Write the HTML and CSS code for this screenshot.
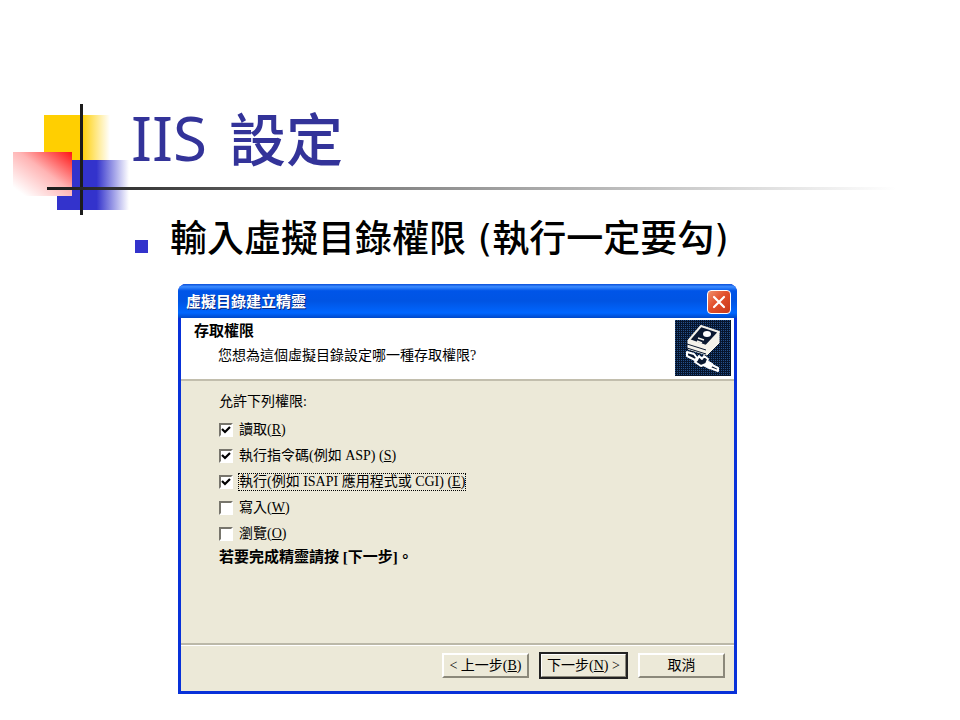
FILE: index.html
```html
<!DOCTYPE html>
<html lang="zh-Hant">
<head>
    <meta charset="UTF-8">
    <meta name="viewport" content="width=device-width, initial-scale=1.0">
    <title>IIS 設定</title>
    <link rel="stylesheet" href="styles.css">
</head>
<body>
    <header class="slide-header">
        <svg class="ornament" width="124" height="120" viewBox="0 0 124 120" aria-hidden="true">
            <defs>
                <linearGradient id="yellow" x1="0" x2="1">
                    <stop offset="0.55" stop-color="#ffcf01"/>
                    <stop offset="0.97" stop-color="#ffcf01" stop-opacity="0"/>
                </linearGradient>
                <linearGradient id="blue" x1="0" x2="1">
                    <stop offset="0.55" stop-color="#3333cc"/>
                    <stop offset="1" stop-color="#3333cc" stop-opacity="0"/>
                </linearGradient>
                <linearGradient id="red" x1="1" y1="0" x2="0.1" y2="0.9">
                    <stop offset="0" stop-color="#ff1414"/>
                    <stop offset="0.5" stop-color="#ffb4b4"/>
                    <stop offset="1" stop-color="#ffffff"/>
                </linearGradient>
            </defs>
            <rect x="31" y="11" width="68" height="46" fill="url(#yellow)"/>
            <rect x="44" y="56" width="72" height="50" fill="url(#blue)"/>
            <rect x="0" y="48" width="59" height="44" fill="url(#red)"/>
            <rect x="67" y="0" width="3" height="111" fill="#1c1c1c"/>
        </svg>
        <h1><span class="latin">IIS</span> <span>設定</span></h1>
    </header>

    <main>
        <ul class="points">
            <li>輸入虛擬目錄權限 (執行一定要勾)</li>
        </ul>

        <form class="dialog">
            <div class="title-bar">
                <h2>虛擬目錄建立精靈</h2>
                <button class="close-button" type="button" aria-label="關閉">
                    <svg width="14" height="14" viewBox="0 0 14 14"><path d="M2 2L12 12M12 2L2 12" stroke="#fff" stroke-width="2.2" stroke-linecap="round"/></svg>
                </button>
            </div>

            <div class="dialog-body">
                <div class="banner">
                    <div class="banner-text">
                        <h3>存取權限</h3>
                        <p>您想為這個虛擬目錄設定哪一種存取權限?</p>
                    </div>
                    <svg class="banner-icon" width="56" height="56" viewBox="0 0 56 56" aria-hidden="true">
                        <defs>
                            <pattern id="dots" width="2" height="2" patternUnits="userSpaceOnUse">
                                <rect width="2" height="2" fill="#06152d"/>
                                <rect width="1" height="1" fill="#24508a"/>
                            </pattern>
                        </defs>
                        <rect width="56" height="56" fill="url(#dots)"/>
                        <g stroke-linejoin="round">
                            <!-- stacked pages -->
                            <path d="M13 20L31 26L44 13V23L32 35L13 29Z" fill="#f4f2ea" stroke="#f4f2ea"/>
                            <path d="M12 24L31 30M12 28L31 34" fill="none" stroke="#0a1830"/>
                            <!-- cover -->
                            <path d="M14 20L26 6L44 12L31 26Z" fill="#0a1830" stroke="#f4f2ea" stroke-width="2"/>
                            <ellipse cx="32" cy="14" rx="4" ry="3" fill="#fff"/>
                            <path d="M23 18L29 20M22 21L27 23" stroke="#f4f2ea" stroke-width="1.5"/>
                            <!-- cable and plug -->
                            <path d="M12 32L19 34L22 38L20 40L12 36Z" fill="#0a1830" stroke="#fff" stroke-width="2"/>
                            <path d="M24 36L22 40L20 42L26 46L31 44L33 39L29 36L27 39Z" fill="#0a1830" stroke="#fff" stroke-width="2"/>
                            <path d="M33 41L38 44L35 49L29 46Z" fill="#fff" stroke="#fff"/>
                            <path d="M37 45L43 48V51L35 48Z" fill="#0a1830" stroke="#fff" stroke-width="2"/>
                        </g>
                    </svg>
                </div>

                <fieldset class="permissions">
                    <legend>允許下列權限:</legend>
                    <label><input type="checkbox" checked><span>讀取(<u>R</u>)</span></label>
                    <label><input type="checkbox" checked><span>執行指令碼(例如 ASP) (<u>S</u>)</span></label>
                    <label><input type="checkbox" checked><span class="focused">執行(例如 ISAPI 應用程式或 CGI) (<u>E</u>)</span></label>
                    <label><input type="checkbox"><span>寫入(<u>W</u>)</span></label>
                    <label><input type="checkbox"><span>瀏覽(<u>O</u>)</span></label>
                    <p class="hint">若要完成精靈請按 [下一步]。</p>
                </fieldset>

                <div class="actions">
                    <button type="button">&lt; 上一步(<u>B</u>)</button>
                    <button type="button" class="default">下一步(<u>N</u>) &gt;</button>
                    <button type="button">取消</button>
                </div>
            </div>
        </form>
    </main>
</body>
</html>
```

FILE: styles.css
```css
* {
    box-sizing: border-box;
}

body {
    margin: 0;
    padding: 104px 64px 26px 13px;
    background: #fff;
    color: #000;
    font-family: "Noto Sans", "Noto Sans CJK TC", sans-serif;
}

h1, h2, h3, p, ul {
    margin: 0;
}

/* Slide heading */
.slide-header {
    position: relative;
    display: flex;
    height: 112px;
}

.slide-header::after {
    content: "";
    position: absolute;
    left: 34px;
    right: 0;
    top: 83px;
    height: 3px;
    background: linear-gradient(90deg, #1c1c1c, #808080 38%, #fff);
}

.ornament {
    flex: none;
    margin-right: -6px;
}

h1 {
    display: flex;
    align-items: baseline;
    gap: 22px;
    color: #333399;
    font-size: 57px;
    font-weight: 500;
    line-height: 66px;
}

h1 .latin {
    font-size: 62px;
    font-weight: 400;
}

.points {
    padding: 0 0 0 122px;
    list-style: none;
}

.points li {
    display: flex;
    align-items: center;
    gap: 22px;
    font-family: "DejaVu Sans", "Noto Sans CJK TC", sans-serif;
    font-size: 37px;
    font-weight: 500;
    line-height: 48px;
}

.points li::before {
    content: "";
    width: 13px;
    height: 13px;
    margin-top: 12px;
    background: #3333cc;
}

/* Wizard window */
.dialog {
    margin: 20px 159px 0 165px;
    border: solid #0831d9;
    border-width: 0 3px 3px;
    border-radius: 8px 8px 0 0;
    background: #0831d9;
    font-family: "Liberation Serif", "Noto Sans CJK TC", serif;
    font-size: 14px;
}

.title-bar {
    display: flex;
    align-items: center;
    justify-content: space-between;
    height: 34px;
    margin: 0 -3px;
    padding: 2px 6px 0 8px;
    border-radius: 8px 8px 0 0;
    background: linear-gradient(#0a4fd8, #3c8cff 8%, #0055e8 20%, #0054e3 50%, #0066ff 85%, #0048c8);
}

.title-bar h2 {
    color: #fff;
    font-size: 15px;
    line-height: 20px;
    text-shadow: 1px 1px #0a2a80;
}

.close-button {
    display: flex;
    align-items: center;
    justify-content: center;
    width: 24px;
    height: 24px;
    padding: 0;
    border: 1px solid #fff;
    border-radius: 4px;
    background: linear-gradient(135deg, #f0906c, #e2502c 45%, #c8381a);
}

.dialog-body {
    background: #ece9d8;
}

.banner {
    display: flex;
    justify-content: space-between;
    padding: 2px 3px 3px 13px;
    border-bottom: 2px solid #c2bead;
    background: #fff;
}

.banner-text h3 {
    font-size: 15px;
    line-height: 22px;
}

.banner-text p {
    padding: 4px 0 0 24px;
    line-height: 20px;
}

.banner-icon {
    flex: none;
}

.permissions {
    min-height: 262px;
    margin: 0;
    padding: 0 0 0 38px;
    border: 0;
}

.permissions legend {
    padding: 11px 0 5px;
    line-height: 20px;
}

.permissions label {
    display: flex;
    align-items: center;
    gap: 6px;
    height: 26px;
    line-height: 16px;
}

.permissions input {
    appearance: none;
    width: 14px;
    height: 14px;
    margin: 0;
    border: 2px solid;
    border-color: #77756c #fff #fff #77756c;
    background: #fff;
}

.permissions input:checked {
    background: #fff url("data:image/svg+xml,%3Csvg xmlns='http://www.w3.org/2000/svg' viewBox='0 0 10 10'%3E%3Cpath d='M1 4L4 7L9 2' fill='none' stroke='%23000' stroke-width='2.2'/%3E%3C/svg%3E");
}

.focused {
    outline: 1px dotted #000;
}

.hint {
    font-size: 15px;
    font-weight: 700;
    line-height: 20px;
}

.actions {
    display: flex;
    justify-content: flex-end;
    gap: 11px;
    padding: 8px 9px 13px;
    border-top: 2px solid #bbb8a8;
    box-shadow: inset 0 1px #fff;
}

.actions button {
    width: 87px;
    height: 25px;
    padding: 0;
    border: 2px solid;
    border-color: #fff #8b887a #8b887a #fff;
    background: #ece9d8;
    color: #000;
    font: inherit;
    line-height: 20px;
    white-space: nowrap;
}

.actions .default {
    outline: 2px solid #222;
    outline-offset: -1px;
}
```
